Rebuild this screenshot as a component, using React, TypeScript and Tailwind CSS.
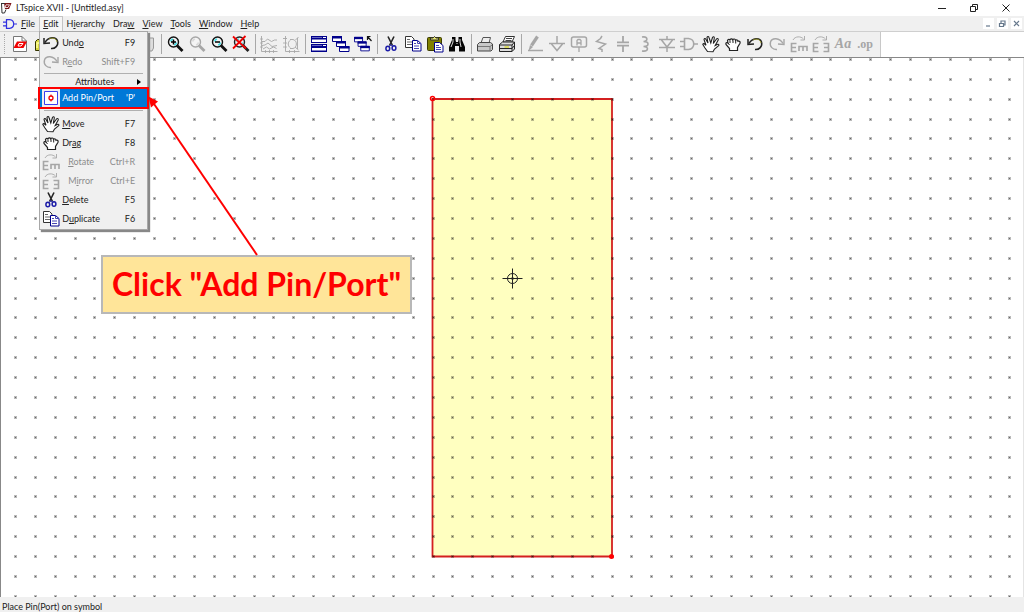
import React from 'react';
import clsx from 'clsx';

interface IconProps {
  children: React.ReactNode;
  size?: string;
}

// 18px icon grid shared by the toolbar and the menu
const Svg: React.FC<IconProps> = ({ children, size = 'w-[18px] h-[18px]' }) => (
  <svg viewBox="0 0 18 18" fill="none" className={clsx('shrink-0', size)} aria-hidden="true">
    {children}
  </svg>
);

const GREY = '#a6a6a6';
const NAVY = '#00008b';

const NewIcon = () => (
  <Svg>
    <path d="M2.500 1.500h8.500l4.500 4.500v10.500h-13z" fill="#fff" stroke="#777" />
    <path d="M11 1.500v4.500h4.500" stroke="#777" />
    <path d="M6 6.500h10l-3.500 6.500h-10z" fill="#f00000" />
    <path d="M8 8.500l4 0l-2 2.500l-3 0z" stroke="#fff" strokeWidth="1" />
  </Svg>
);

const OpenIcon = () => (
  <Svg>
    <path d="M2.500 15.500v-9l2-2h4l1 2h6v9z" fill="#d4d43c" stroke="#333300" />
    <path d="M4 13V8h10" stroke="#ffff99" strokeWidth="1.500" />
  </Svg>
);

const ZoomGlass: React.FC<{ color: string; tint: string; children?: React.ReactNode }> = ({ color, tint, children }) => (
  <Svg>
    <circle cx="7.500" cy="7" r="5" fill="#f4f4f4" stroke={color} strokeWidth="1.400" />
    <path d="M4.600 6.500c.3-1.500 1-2.300 2.400-2.600M10.500 7.500c-.3 1.500-1 2.300-2.400 2.600" stroke={tint} strokeWidth="1.500" />
    <path d="M11 10.500l5.500 5.500" stroke={color} strokeWidth="2.800" />
    {children}
  </Svg>
);

const ZoomIn = () => (
  <ZoomGlass color="#111" tint="#40e0e8">
    <path d="M7.500 4.500v5M5 7h5" stroke="#000" strokeWidth="1.500" />
  </ZoomGlass>
);
const ZoomPan = () => <ZoomGlass color={GREY} tint="#d8d8d8" />;
const ZoomOut = () => (
  <ZoomGlass color="#111" tint="#40e0e8">
    <path d="M5 7h5" stroke="#000" strokeWidth="1.500" />
  </ZoomGlass>
);
const ZoomFit = () => (
  <ZoomGlass color="#222" tint="#40e0e8">
    <path d="M1 1.500l13 12M13.500 1L1 13.500" stroke="#f00000" strokeWidth="1.800" />
  </ZoomGlass>
);

const PlotIcon = () => (
  <Svg>
    <path d="M1.500 1v15.500h16M2 6.500h3l2.500-2.500 4 2.500 3-1.500h2.500M2 10.500l3-.5 3-2 4 3.500 5-1M3 14l3.500-2 3 2 4-2 3 1.500" stroke={GREY} strokeWidth=".9" />
    <path d="M0 4h3M0 8h3M0 12h3M5.500 15v3M9.500 15v3M13.500 15v3" stroke={GREY} strokeWidth=".8" />
  </Svg>
);

const FftIcon = () => (
  <Svg>
    <path d="M3.500 1v15.500h14M1 3.500h4M15.500 3v11M8.500 5c-3 2-3 6 0 8M8 4.500h3c4.500 1 4.500 8 0 9h-3M16.500 2l-3 3M13 12l3.500 3" stroke={GREY} strokeWidth=".9" />
    <path d="M1 8h4M1 12h4M7.500 15v3M12.500 15v3" stroke={GREY} strokeWidth=".8" />
  </Svg>
);

const TileIcon = () => (
  <Svg>
    <path d="M1 1h16v7H1zM1 9h16v8H1z" fill={NAVY} />
    <path d="M2 4.500h14v2.500H2zM2 13h14v2.500H2z" fill="#fff" />
    <path d="M2 2.500h10M2 10.500h10" stroke="#6868c0" />
    <path d="M13 2.500h3M13 10.500h3" stroke="#fff" />
  </Svg>
);

const CascadeShapes = () => (
  <>
    <path d="M.500 1.500h9v5h-9z" fill="#fff" stroke={NAVY} />
    <path d="M0 1h10v2.500H0z" fill={NAVY} />
    <path d="M4.500 6.500h9v5h-9z" fill="#fff" stroke={NAVY} />
    <path d="M4 6h10v2.500H4z" fill={NAVY} />
    <path d="M7.500 11.500h9.500v5H7.500z" fill="#fff" stroke={NAVY} />
    <path d="M7 11h10.500v2.500H7z" fill={NAVY} />
  </>
);
const CascadeIcon = () => <Svg><CascadeShapes /></Svg>;
const CloseAllIcon = () => (
  <Svg>
    <g transform="translate(0 1) scale(.9)"><CascadeShapes /></g>
    <path d="M13 1.500h3.500M13.500 1v4M13.500 1.500l4 4.500" stroke="#111" strokeWidth="1.200" />
  </Svg>
);

const CutIcon = () => (
  <Svg>
    <path d="M6 1.500l4.500 9M12 1.500l-4.500 9" stroke="#222" strokeWidth="1.600" />
    <ellipse cx="5.800" cy="13.500" rx="1.900" ry="2.300" stroke="#1c1ca8" strokeWidth="1.500" />
    <ellipse cx="12" cy="13" rx="1.900" ry="2.300" stroke="#1c1ca8" strokeWidth="1.500" />
    <path d="M7.500 11.500l1.500-2 1.500 2" stroke="#1c1ca8" />
  </Svg>
);

const CopyIcon = () => (
  <Svg>
    <path d="M1.500 1.500h6l2.500 2.500v8.500H1.500z" fill="#fff" stroke="#333" />
    <path d="M3 4.500h3M3 7h5M3 9.500h5" stroke="#666" />
    <path d="M8.500 5.500h5l3.500 3v7.500H8.500z" fill="#fff" stroke={NAVY} />
    <path d="M13.500 5.500v3h3.500M10 8.500h2M10 11h5M10 13.500h5" stroke="#4646b4" />
  </Svg>
);

const PasteIcon = () => (
  <Svg>
    <rect x="1.500" y="2.500" width="14" height="13" rx="1" fill="#808000" stroke="#3a3a00" />
    <path d="M4.500 5V3h2.500l1.500-1.500L10 3h2.500v2z" fill="#e8e870" stroke="#333" />
    <path d="M8.500 7.500h5l3.500 3v6.500H8.500z" fill="#fff" stroke={NAVY} />
    <path d="M10 10.500h3M10 12.500h5M10 14.500h5" stroke="#4646b4" />
  </Svg>
);

const FindIcon = () => (
  <Svg>
    <path d="M4 2h3.500v3L8 7h2l.500-2V2H14v3l3 7v4.500h-6V11H7v5.500H1V12l3-7z" fill="#050505" />
    <path d="M5 4v3l-2 5M12 4v3l1 5M8.500 8.500h1" stroke="#eee" strokeWidth=".9" />
  </Svg>
);

const PrintIcon = () => (
  <Svg>
    <path d="M5 8l2-5.500h7.500L13 8" fill="#eee" stroke="#555" />
    <path d="M1.500 9.500L3.500 7.500h11l2 1.500v5.500l-1.500 1.500H1.500z" fill="#c8c8c8" stroke="#444" />
    <path d="M2 11.500h12l2-1.500M14 11.500V16" stroke="#777" />
  </Svg>
);

const PrintSetupIcon = () => (
  <Svg>
    <path d="M5 7l2.500-5.500h9L14 7z" fill="#fff" stroke="#333" />
    <path d="M8 3.500h6M7.500 5.500h6" stroke="#444" />
    <path d="M1.500 9.500l3-2.500h12v7L14 16.500H1.500z" fill="#ddd" stroke="#222" />
    <path d="M1.500 10H14v6.500M14 10l2.500-3M2 13.500h12l2.500-3" stroke="#222" strokeWidth="1" />
    <path d="M6.500 12h4.500" stroke="#d8d83c" strokeWidth="1.500" />
  </Svg>
);

const PencilIcon = () => (
  <Svg>
    <path d="M11.500 1.500l-6 9" stroke={GREY} strokeWidth="3.200" />
    <path d="M4 10l3 2-4.500 4z" fill={GREY} />
    <path d="M2 15.500h15" stroke={GREY} strokeWidth="1.500" />
  </Svg>
);
const GroundIcon = () => (
  <Svg><path d="M9 1v7.500M1 8.500h16M3.500 9l5.500 6.500L14.500 9" stroke={GREY} strokeWidth="1.500" /></Svg>
);
const LabelIcon = () => (
  <Svg>
    <rect x="1.500" y="2" width="15" height="10" rx="2" stroke={GREY} strokeWidth="1.500" />
    <path d="M7 10.500V5.500l1-1h2l1 1v5M7 8h4M9 12v5" stroke={GREY} strokeWidth="1.300" />
  </Svg>
);
const ResistorIcon = () => (
  <Svg><path d="M10 1L8.500 3.500l-4 3 9 2.500-6.500 4.500 3 1v2.500" stroke={GREY} strokeWidth="1.500" /></Svg>
);
const CapIcon = () => (
  <Svg><path d="M9 1v6M3 7.300h12M3 10.700h12M9 11v6" stroke={GREY} strokeWidth="1.800" /></Svg>
);
const InductorIcon = () => (
  <Svg><path d="M6 2c6-1 6.500 4.500 1.500 4.500 6 0 6 5 0 5 6 0 5 5.500-1.500 4.500" stroke={GREY} strokeWidth="1.600" /></Svg>
);
const DiodeIcon = () => (
  <Svg><path d="M1 4.500h16M3.500 5l5.500 7L14.500 5M1 12.500h16M9 1v3M9 12.500V17" stroke={GREY} strokeWidth="1.500" /></Svg>
);
const GateIcon: React.FC<{ color?: string; size?: string }> = ({ color = GREY, size }) => (
  <Svg size={size}>
    <path d="M4.500 3.500h4c7 .5 7 10.500 0 11h-4zM0 6.500h4M0 11.500h4M14 9h4" stroke={color} strokeWidth="1.600" />
  </Svg>
);

const MoveIcon = () => (
  <Svg>
    <path
      d="M5.500 16.500L3 13 .800 9.500c.4-1.300 1.500-1.100 2.200-.2L4 10.300 2 4.500c.3-1.300 1.400-1.300 2 0L6 8 5 2.500c.4-1.400 1.600-1.400 2 0L8.800 8 10.500 2.500c.8-1.300 2-.8 1.800.5l-1 5.500L14.500 4c1-1 2.200-.3 1.700 1l-3 5.500 2.500-1.200c1.200-.2 1.700.8.7 1.600L12.500 14l-1.500 2.700z"
      fill="#fff"
      stroke="#222"
      strokeWidth="1.100"
    />
  </Svg>
);
const DragIcon = () => (
  <Svg>
    <path
      d="M5.500 15.500v-2L2 9.500C1.500 8 2.500 7 4 8L3.500 5.500c.5-1.500 2-1.500 2.500-.2.2-1.800 2.200-1.800 2.800-.3.6-1.500 2.400-1.200 2.700.3 1-1 2.500-.3 2.500 1 1.500-.6 2.500.4 2 2L13.500 12.500v3z"
      fill="#fff"
      stroke="#222"
      strokeWidth="1.200"
    />
    <path d="M6 5.500V8M9 5.500V8M11.700 6v2.500M4 8l1.500 2" stroke="#222" />
  </Svg>
);
const HaltIcon = () => (
  <Svg><path d="M4 16v-4L2 8l2 1V3h2v5V2h3v6-6h2v6-5h4.500v10l-1.500 3z" fill="#ddd" stroke="#999" /></Svg>
);
const UndoIcon = () => (
  <Svg>
    <path d="M3 8.500C6.500 2.500 14 2.500 15.500 7c1.300 4.500-2.500 8-6.500 7.500" stroke="#222" strokeWidth="1.500" />
    <path d="M7 5c4-2 7.300-.5 8 3" stroke="#a0a020" strokeWidth=".8" />
    <path d="M2 4v5.500l6-.5" stroke="#222" strokeWidth="1.500" />
  </Svg>
);
const RedoIcon = () => (
  <Svg>
    <path d="M15 8.500C11.500 2.500 4 2.500 2.500 7c-1.300 4.500 2.500 8 6.500 7.500" stroke={GREY} strokeWidth="1.400" />
    <path d="M16 4v5.500l-6-.5" stroke={GREY} strokeWidth="1.400" />
  </Svg>
);
const RotateIcon = () => (
  <Svg>
    <path d="M3 5c2-4 8-4 10.500-1M14.500 1v4h-4" stroke={GREY} strokeWidth=".9" />
    <path d="M6.500 8.500H1.500v8h5M1.500 12.500H6M9 16v-4.500h8V16M13 11.500V16" stroke={GREY} strokeWidth="1.600" />
  </Svg>
);
const MirrorIcon = () => (
  <Svg>
    <path d="M3 5c2-4 8-4 10.500-1M14.500 1v4h-4" stroke={GREY} strokeWidth=".9" />
    <path d="M6.500 8.500H1.500v8h5M1.500 12.500H6M11.500 8.500h5v8h-5M16.500 12.500H12" stroke={GREY} strokeWidth="1.600" />
  </Svg>
);
const PinIcon = () => (
  <Svg>
    <path d="M2.500 2.500h13v13h-13z" fill="#fff" stroke="#3c3cf0" />
    <circle cx="9" cy="9" r="2" stroke="#f00000" strokeWidth="1.300" />
    <path d="M9 5.500v2M9 10.500v2" stroke="#f00000" />
  </Svg>
);

const LogoIcon = () => (
  <svg viewBox="0 0 12 12" className="w-3 h-3" aria-hidden="true">
    <path d="M4 1h7.500L9 7H5z" fill="#7d1518" />
    <path d="M1.500 1.500l.5 9.500h2.500L6 7.500M1 1.500h4" stroke="#333" fill="none" />
    <path d="M6 2.800h3.500L8 5.500H5z" fill="none" stroke="#fff" strokeWidth=".8" />
  </svg>
);

const Sep = () => (
  <span className="flex w-1.5 h-5 justify-center shrink-0"><span className="w-px h-full bg-[#a8a8a8]" /></span>
);

interface Tool {
  name: string;
  icon: React.ReactNode;
}

const fileTools: Tool[] = [
  { name: 'New', icon: <NewIcon /> },
  { name: 'Open', icon: <OpenIcon /> },
];

const toolGroups: Tool[][] = [
  [
    { name: 'Halt', icon: <HaltIcon /> },
  ],
  [
    { name: 'Zoom in', icon: <ZoomIn /> },
    { name: 'Pan', icon: <ZoomPan /> },
    { name: 'Zoom out', icon: <ZoomOut /> },
    { name: 'Zoom to fit', icon: <ZoomFit /> },
  ],
  [
    { name: 'Autorange', icon: <PlotIcon /> },
    { name: 'Plot settings', icon: <FftIcon /> },
  ],
  [
    { name: 'Tile', icon: <TileIcon /> },
    { name: 'Cascade', icon: <CascadeIcon /> },
    { name: 'Close all', icon: <CloseAllIcon /> },
  ],
  [
    { name: 'Cut', icon: <CutIcon /> },
    { name: 'Copy', icon: <CopyIcon /> },
    { name: 'Paste', icon: <PasteIcon /> },
    { name: 'Find', icon: <FindIcon /> },
  ],
  [
    { name: 'Print', icon: <PrintIcon /> },
    { name: 'Print setup', icon: <PrintSetupIcon /> },
  ],
  [
    { name: 'Wire', icon: <PencilIcon /> },
    { name: 'Ground', icon: <GroundIcon /> },
    { name: 'Label net', icon: <LabelIcon /> },
    { name: 'Resistor', icon: <ResistorIcon /> },
    { name: 'Capacitor', icon: <CapIcon /> },
    { name: 'Inductor', icon: <InductorIcon /> },
    { name: 'Diode', icon: <DiodeIcon /> },
    { name: 'Component', icon: <GateIcon /> },
    { name: 'Move', icon: <MoveIcon /> },
    { name: 'Drag', icon: <DragIcon /> },
    { name: 'Undo', icon: <UndoIcon /> },
    { name: 'Redo', icon: <RedoIcon /> },
    { name: 'Rotate', icon: <RotateIcon /> },
    { name: 'Mirror', icon: <MirrorIcon /> },
    { name: 'Text', icon: <span className="font-['Liberation_Serif',serif] text-[14px] font-bold italic text-[#a6a6a6]">Aa</span> },
    { name: 'SPICE directive', icon: <span className="font-['Liberation_Serif',serif] text-[12px] font-bold text-[#a6a6a6]">.op</span> },
  ],
];

const ToolButton: React.FC<{ tool: Tool }> = ({ tool }) => (
  <button type="button" aria-label={tool.name} className="flex items-center justify-center w-[22px] h-[22px] shrink-0">
    {tool.icon}
  </button>
);

// "&" marks the letter that is underlined
const Mnemonic: React.FC<{ text: string }> = ({ text }) => {
  const at = text.indexOf('&');
  if (at < 0) return <>{text}</>;
  return <>{text.slice(0, at)}<u>{text[at + 1]}</u>{text.slice(at + 2)}</>;
};

interface EditItem {
  label: string;
  keys?: string;
  icon?: React.ReactNode;
  disabled?: boolean;
  indent?: boolean;
}

const historyItems: EditItem[] = [
  { label: 'Und&o', keys: 'F9', icon: <UndoIcon /> },
  { label: 'R&edo', keys: 'Shift+F9', icon: <RedoIcon />, disabled: true },
];

const editItems: EditItem[] = [
  { label: '&Move', keys: 'F7', icon: <MoveIcon /> },
  { label: 'Dr&ag', keys: 'F8', icon: <DragIcon /> },
  { label: '&Rotate', keys: 'Ctrl+R', icon: <RotateIcon />, disabled: true, indent: true },
  { label: 'M&irror', keys: 'Ctrl+E', icon: <MirrorIcon />, disabled: true, indent: true },
  { label: '&Delete', keys: 'F5', icon: <CutIcon /> },
  { label: 'D&uplicate', keys: 'F6', icon: <CopyIcon /> },
];

const EditRow: React.FC<{ item: EditItem }> = ({ item }) => (
  <button
    type="button"
    disabled={item.disabled}
    className={clsx('flex items-center w-full h-[19px] pl-0.5 pr-3', item.disabled && 'text-[#8c8c8c]')}
  >
    {item.icon}
    <span className={item.indent ? 'pl-2' : 'pl-0.5'}><Mnemonic text={item.label} /></span>
    <span className="ml-auto">{item.keys}</span>
  </button>
);

const EditMenu = () => (
  <div className="absolute left-0 top-[15px] z-20 w-[109px] border border-[#a8a8a8] bg-[#f0f0f0] py-px shadow-[2px_2px_1px_#888]">
    {historyItems.map((item) => <EditRow key={item.label} item={item} />)}
    <hr className="mx-1 mt-0.5 mb-px border-[#b0b0b0]" />
    <button type="button" className="flex items-center w-full h-3.5 pl-[35px] pr-1.5">
      Attributes
      <svg viewBox="0 0 4 6" className="w-1 h-1.5 ml-auto" aria-hidden="true"><path d="M0 0l4 3-4 3z" fill="#000" /></svg>
    </button>
    <div className="relative">
      <button type="button" className="flex items-center w-full h-[18px] pl-0.5 pr-3 bg-[#0078d7] text-white">
        <span className="bg-[#f0f0f0]"><PinIcon /></span>
        <span className="pl-0.5">Add Pin/Port</span>
        <span className="ml-auto">'P'</span>
      </button>
      <span className="absolute -inset-x-0.5 -inset-y-0.5 border-2 border-[#ff0000]" />
    </div>
    <hr className="mx-1 mt-[3px] mb-[3px] border-[#b0b0b0]" />
    {editItems.map((item) => <EditRow key={item.label} item={item} />)}
  </div>
);

const menus = ['&File', '&Edit', 'H&ierarchy', 'Dra&w', '&View', '&Tools', '&Window', '&Help'];

const MenuBar = () => (
  <nav className="flex items-center h-[15px] bg-[#f0f0f0] pl-[3px]">
    <GateIcon color="#3030e0" size="w-3.5 h-3.5" />
    {menus.map((menu) => {
      const open = menu === '&Edit';
      return (
        <div key={menu} className="relative">
          <button
            type="button"
            className={clsx('flex items-center h-[15px] px-[3px] border-x border-t', open ? 'border-[#c4c4c4] bg-[#f6f6f6]' : 'border-transparent')}
          >
            <span><Mnemonic text={menu} /></span>
          </button>
          {open && <EditMenu />}
        </div>
      );
    })}
    <div className="flex gap-[3px] ml-auto pr-0.5">
      {['M3 8h4', 'M2.500 5.500h4v3h-4zM4 5V3h4v4H7', 'M3 3l5 5M8 3l-5 5'].map((d, i) => (
        <button key={d} type="button" aria-label={['Minimize document', 'Restore document', 'Close document'][i]} className="w-[11px] h-[11px] bg-white">
          <svg viewBox="0 0 11 11" className="w-[11px] h-[11px]" fill="none" aria-hidden="true"><path d={d} stroke="#66788c" strokeWidth="1.200" /></svg>
        </button>
      ))}
    </div>
  </nav>
);

const TitleBar = () => (
  <header className="flex items-center h-4 bg-white text-[#222]">
    <LogoIcon />
    <h1 className="pl-1">LTspice XVII - [Untitled.asy]</h1>
    <div className="flex ml-auto gap-5 pr-3">
      <button type="button" aria-label="Minimize" className="w-3 h-3">
        <svg viewBox="0 0 12 12" className="w-3 h-3" aria-hidden="true"><path d="M2 6.500h8" stroke="#222" /></svg>
      </button>
      <button type="button" aria-label="Restore" className="w-3 h-3">
        <svg viewBox="0 0 12 12" className="w-3 h-3" fill="none" aria-hidden="true"><path d="M2.500 4.500h5v5h-5zM4.500 4V2.500h5v5H8" stroke="#222" /></svg>
      </button>
      <button type="button" aria-label="Close" className="w-3 h-3">
        <svg viewBox="0 0 12 12" className="w-3 h-3" aria-hidden="true"><path d="M2.500 2.500l7 7M9.500 2.500l-7 7" stroke="#222" /></svg>
      </button>
    </div>
  </header>
);

const Toolbar = () => (
  <div className="flex h-[27px] border-t border-[#cfcfcf] border-b border-b-[#888] bg-white">
    <div className="flex items-center pr-1 pb-px bg-[#f0f0f0] border-r border-[#c8c8c8]">
      <span className="w-[9px] h-5 pl-1 shrink-0"><span className="block h-full border-l border-dotted border-[#aaa]" /></span>
      {fileTools.map((tool) => <ToolButton key={tool.name} tool={tool} />)}
      <span className="w-[83px] shrink-0" />
      {toolGroups.map((group, i) => (
        <React.Fragment key={i}>
          {i > 0 && <Sep />}
          {group.map((tool) => <ToolButton key={tool.name} tool={tool} />)}
        </React.Fragment>
      ))}
    </div>
  </div>
);

// Grid pitch and origin of the drawing sheet
const PITCH = 19.89;
const dots: [number, number][] = [];
for (let row = 0; row < 80; row++) {
  for (let col = 0; col < 140; col++) {
    dots.push([Math.floor(15.4 + col * PITCH), Math.floor(1.4 + row * PITCH)]);
  }
}
const dotHalo = dots.map(([x, y]) => `M${x - 1} ${y - 1}h3v3h-3z`).join('');
const dotCore = dots.map(([x, y]) => `M${x} ${y}h1v1h-1z`).join('');

const Sheet = () => (
  <svg className="absolute inset-0 w-full h-full" fill="none" aria-hidden="true">
    <path d="M432.500 41h179.500v457.500h-179.500z" fill="#ffffc0" stroke="#d42020" strokeWidth="1.800" />
    <path d={dotHalo} fill="#000" fillOpacity=".27" />
    <path d={dotCore} fill="#000" fillOpacity=".45" />
    <circle cx="432.500" cy="40.500" r="2" stroke="#f00" strokeWidth="1.500" />
    <circle cx="611.500" cy="498.500" r="2.500" fill="#f00" />
    <circle cx="512.500" cy="220.500" r="5" stroke="#222" strokeWidth="1" />
    <path d="M502.500 220.500h20M512.500 210.500v20" stroke="#222" strokeWidth="1" />
  </svg>
);

const App: React.FC = () => {
  return (
    <div className="flex flex-col h-screen overflow-hidden bg-white font-['Lato','Noto_Sans',sans-serif] text-[9px] leading-3 text-[#222]">
      <TitleBar />
      <MenuBar />
      <Toolbar />

      <main className="relative flex-1 min-h-0 overflow-hidden border-l border-r border-l-[#888] border-r-[#e4e4e4]">
        <div className="absolute inset-y-0 -left-px right-0"><Sheet /></div>
        <p className="absolute left-[100px] top-[197px] flex items-center justify-center w-[311px] h-[59px] pb-0.5 border-2 border-[#b8b8b8] bg-[#ffe599] text-[32px] leading-9 font-bold text-[#ff0000] whitespace-nowrap">
          Click "Add Pin/Port"
        </p>
      </main>

      <footer className="flex items-center h-[15px] px-0.5 pt-1 bg-[#f0f0f0]">Place Pin(Port) on symbol</footer>

      {/* arrow from the note up to the highlighted entry */}
      <svg className="absolute left-0 top-0 z-30 w-[300px] h-[260px] pointer-events-none" fill="none" aria-hidden="true">
        <path d="M257 255L152 101" stroke="#f00" strokeWidth="2" />
        <path d="M148.500 96.500l9.500 5-7 6z" fill="#f00" />
      </svg>
    </div>
  );
};

export default App;
